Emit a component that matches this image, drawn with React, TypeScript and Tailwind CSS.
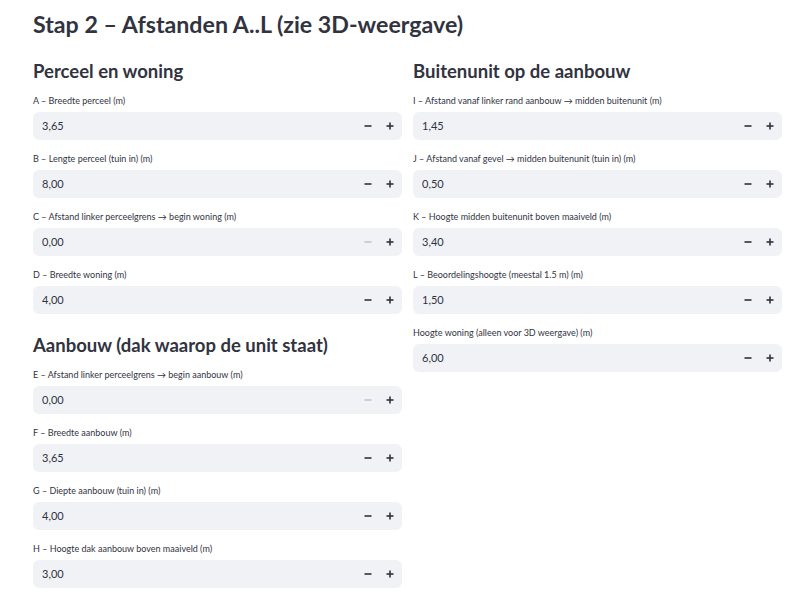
import React from 'react';

// --- Types ---
type Field = { label: string; value: string; minDisabled?: boolean };

const perceel: Field[] = [
  { label: 'A – Breedte perceel (m)', value: '3,65' },
  { label: 'B – Lengte perceel (tuin in) (m)', value: '8,00' },
  { label: 'C – Afstand linker perceelgrens → begin woning (m)', value: '0,00', minDisabled: true },
  { label: 'D – Breedte woning (m)', value: '4,00' },
];

const aanbouw: Field[] = [
  { label: 'E – Afstand linker perceelgrens → begin aanbouw (m)', value: '0,00', minDisabled: true },
  { label: 'F – Breedte aanbouw (m)', value: '3,65' },
  { label: 'G – Diepte aanbouw (tuin in) (m)', value: '4,00' },
  { label: 'H – Hoogte dak aanbouw boven maaiveld (m)', value: '3,00' },
];

const buitenunit: Field[] = [
  { label: 'I – Afstand vanaf linker rand aanbouw → midden buitenunit (m)', value: '1,45' },
  { label: 'J – Afstand vanaf gevel → midden buitenunit (tuin in) (m)', value: '0,50' },
  { label: 'K – Hoogte midden buitenunit boven maaiveld (m)', value: '3,40' },
  { label: 'L – Beoordelingshoogte (meestal 1.5 m) (m)', value: '1,50' },
  { label: 'Hoogte woning (alleen voor 3D weergave) (m)', value: '6,00' },
];

function MinusIcon({ disabled }: { disabled?: boolean }) {
  return (
    <svg width="10" height="10" viewBox="0 0 10 10" className={disabled ? 'text-[#c4c6cc]' : 'text-[#31333f]'}>
      <rect x="1.5" y="4.2" width="7" height="1.6" fill="currentColor" />
    </svg>
  );
}

function PlusIcon() {
  return (
    <svg width="10" height="10" viewBox="0 0 10 10" className="text-[#31333f]">
      <rect x="1.5" y="4.2" width="7" height="1.6" fill="currentColor" />
      <rect x="4.2" y="1.5" width="1.6" height="7" fill="currentColor" />
    </svg>
  );
}

function NumberField({ field }: { field: Field }) {
  return (
    <div className="flex flex-col">
      <div className="h-[14px] leading-[14px] text-[9px] mb-[4px] whitespace-nowrap">{field.label}</div>
      <div className="h-[28px] rounded-[6px] bg-[#f0f2f6] flex items-center pl-[9px] pr-[1px]">
        <span className="flex-1 text-[11px]">{field.value}</span>
        <button className="w-[22px] h-[28px] flex items-center justify-center">
          <MinusIcon disabled={field.minDisabled} />
        </button>
        <button className="w-[22px] h-[28px] flex items-center justify-center">
          <PlusIcon />
        </button>
      </div>
    </div>
  );
}

function Section({ title, fields, className = '' }: { title: string; fields: Field[]; className?: string }) {
  return (
    <div className={className}>
      <h3 className="h-[28px] leading-[28px] text-[18.5px] font-bold mb-[9px] whitespace-nowrap">{title}</h3>
      <div className="flex flex-col gap-[12px]">
        {fields.map((f) => (
          <NumberField key={f.label} field={f} />
        ))}
      </div>
    </div>
  );
}

export default function App() {
  return (
    <div className="w-[800px] h-[599px] overflow-hidden bg-white text-[#31333f] font-['Lato',sans-serif]">
      <div className="pl-[33px] w-[782px]">
        <h1 className="h-[57px] pt-[6px] leading-[36px] text-[23.2px] font-bold whitespace-nowrap">
          Stap 2 – Afstanden A..L (zie 3D-weergave)
        </h1>
        <div className="grid grid-cols-2 gap-[11px]">
          <div className="flex flex-col">
            <Section title="Perceel en woning" fields={perceel} />
            <Section title="Aanbouw (dak waarop de unit staat)" fields={aanbouw} className="mt-[17px]" />
          </div>
          <div className="flex flex-col">
            <Section title="Buitenunit op de aanbouw" fields={buitenunit} />
          </div>
        </div>
      </div>
    </div>
  );
}
